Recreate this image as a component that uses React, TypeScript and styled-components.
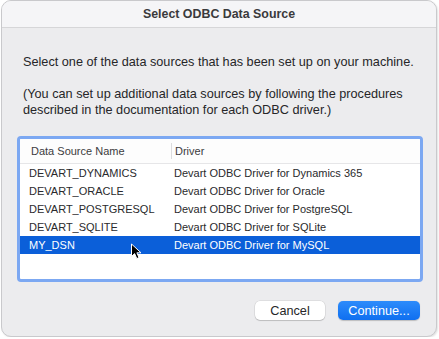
import React from "react";
import styled, { createGlobalStyle } from "styled-components";

const Global = createGlobalStyle`
  html, body { margin: 0; padding: 0; background: #ffffff; }
  body { font-family: "Liberation Sans", Arial, sans-serif; -webkit-font-smoothing: antialiased; }
`;

const Window = styled.div`
  position: relative;
  box-sizing: border-box;
  width: 436px;
  height: 337px;
  margin-left: 1px;
  border: 1px solid #c9c9cc;
  border-radius: 10px;
  background: #ececee;
  overflow: hidden;
  display: flex;
  flex-direction: column;
  box-shadow: 1px 1px 2px rgba(0,0,0,0.12);
`;

const TitleBar = styled.div`
  height: 26px;
  flex: none;
  background: #f5f5f7;
  border-bottom: 1px solid #d6d6d8;
  display: flex;
  align-items: center;
  justify-content: center;
  font-weight: 700;
  font-size: 12.4px;
  color: #3a3a3c;
`;

const Content = styled.div`
  display: flex;
  flex-direction: column;
  padding: 26px 15px 0 15px;
`;

const Para = styled.p<{ $gap?: number }>`
  margin: ${(p) => p.$gap ?? 0}px 0 0 6px;
  font-size: 12.7px;
  line-height: 16px;
  color: #262628;
`;

const TableBox = styled.div`
  margin-top: 18px;
  width: 406px;
  height: 146px;
  box-sizing: border-box;
  border: 3px solid #7ca8f2;
  border-radius: 4px;
  background: #ffffff;
  overflow: hidden;
  font-size: 11px;
  color: #2a2a2c;
`;

const HeaderRow = styled.div`
  display: grid;
  grid-template-columns: 151px 1fr;
  height: 24px;
  border-bottom: 1px solid #e6e6e8;
  background: #fdfdfd;
`;

const HeaderCell = styled.div<{ $sep?: boolean }>`
  display: flex;
  align-items: center;
  padding-left: ${(p) => (p.$sep ? 3 : 11)}px;
  border-left: ${(p) => (p.$sep ? "1px solid #dcdcde" : "none")};
  margin: ${(p) => (p.$sep ? "4px 0" : "0")};
  color: #3c3c3e;
`;

const Row = styled.div<{ $selected?: boolean }>`
  display: grid;
  grid-template-columns: 152px 1fr;
  height: 18px;
  align-items: center;
  background: ${(p) => (p.$selected ? "#0b5fd9" : "transparent")};
  color: ${(p) => (p.$selected ? "#ffffff" : "#2a2a2c")};
`;

const Cell = styled.div<{ $first?: boolean }>`
  padding-left: ${(p) => (p.$first ? 9 : 2)}px;
  white-space: nowrap;
`;

const Footer = styled.div`
  display: flex;
  justify-content: flex-end;
  gap: 13px;
  margin-top: 19px;
  padding-right: 1px;
`;

const Button = styled.button<{ $primary?: boolean }>`
  height: 19px;
  width: ${(p) => (p.$primary ? 82 : 70)}px;
  border-radius: 5px;
  font-family: inherit;
  font-size: 12.7px;
  padding: 0;
  border: none;
  color: ${(p) => (p.$primary ? "#ffffff" : "#262628")};
  background: ${(p) => (p.$primary ? "linear-gradient(#2d8cfb, #0f6ff0)" : "#ffffff")};
  box-shadow: ${(p) =>
    p.$primary
      ? "0 0.5px 1px rgba(0,0,0,0.2)"
      : "0 0 0 0.5px rgba(0,0,0,0.12), 0 1px 1px rgba(0,0,0,0.15)"};
`;

const Cursor = styled.svg`
  position: absolute;
  left: 128px;
  top: 242px;
`;

const rows = [
  ["DEVART_DYNAMICS", "Devart ODBC Driver for Dynamics 365"],
  ["DEVART_ORACLE", "Devart ODBC Driver for Oracle"],
  ["DEVART_POSTGRESQL", "Devart ODBC Driver for PostgreSQL"],
  ["DEVART_SQLITE", "Devart ODBC Driver for SQLite"],
  ["MY_DSN", "Devart ODBC Driver for MySQL"],
];

export default function App() {
  return (
    <>
      <Global />
      <Window>
        <TitleBar>Select ODBC Data Source</TitleBar>
        <Content>
          <Para>Select one of the data sources that has been set up on your machine.</Para>
          <Para $gap={16}>
            (You can set up additional data sources by following the procedures described in the
            documentation for each ODBC driver.)
          </Para>
          <TableBox>
            <HeaderRow>
              <HeaderCell>Data Source Name</HeaderCell>
              <HeaderCell $sep>Driver</HeaderCell>
            </HeaderRow>
            {rows.map(([n, d]) => (
              <Row key={n} $selected={n === "MY_DSN"}>
                <Cell $first>{n}</Cell>
                <Cell>{d}</Cell>
              </Row>
            ))}
          </TableBox>
          <Footer>
            <Button>Cancel</Button>
            <Button $primary>Continue...</Button>
          </Footer>
        </Content>
        <Cursor width="14" height="18" viewBox="0 0 14 18">
          <path
            d="M1.5 1 L1.5 13.5 L4.6 10.6 L6.8 15.6 L9 14.6 L6.9 9.8 L11 9.8 Z"
            fill="#000"
            stroke="#fff"
            strokeWidth="1"
            strokeLinejoin="round"
          />
        </Cursor>
      </Window>
    </>
  );
}
